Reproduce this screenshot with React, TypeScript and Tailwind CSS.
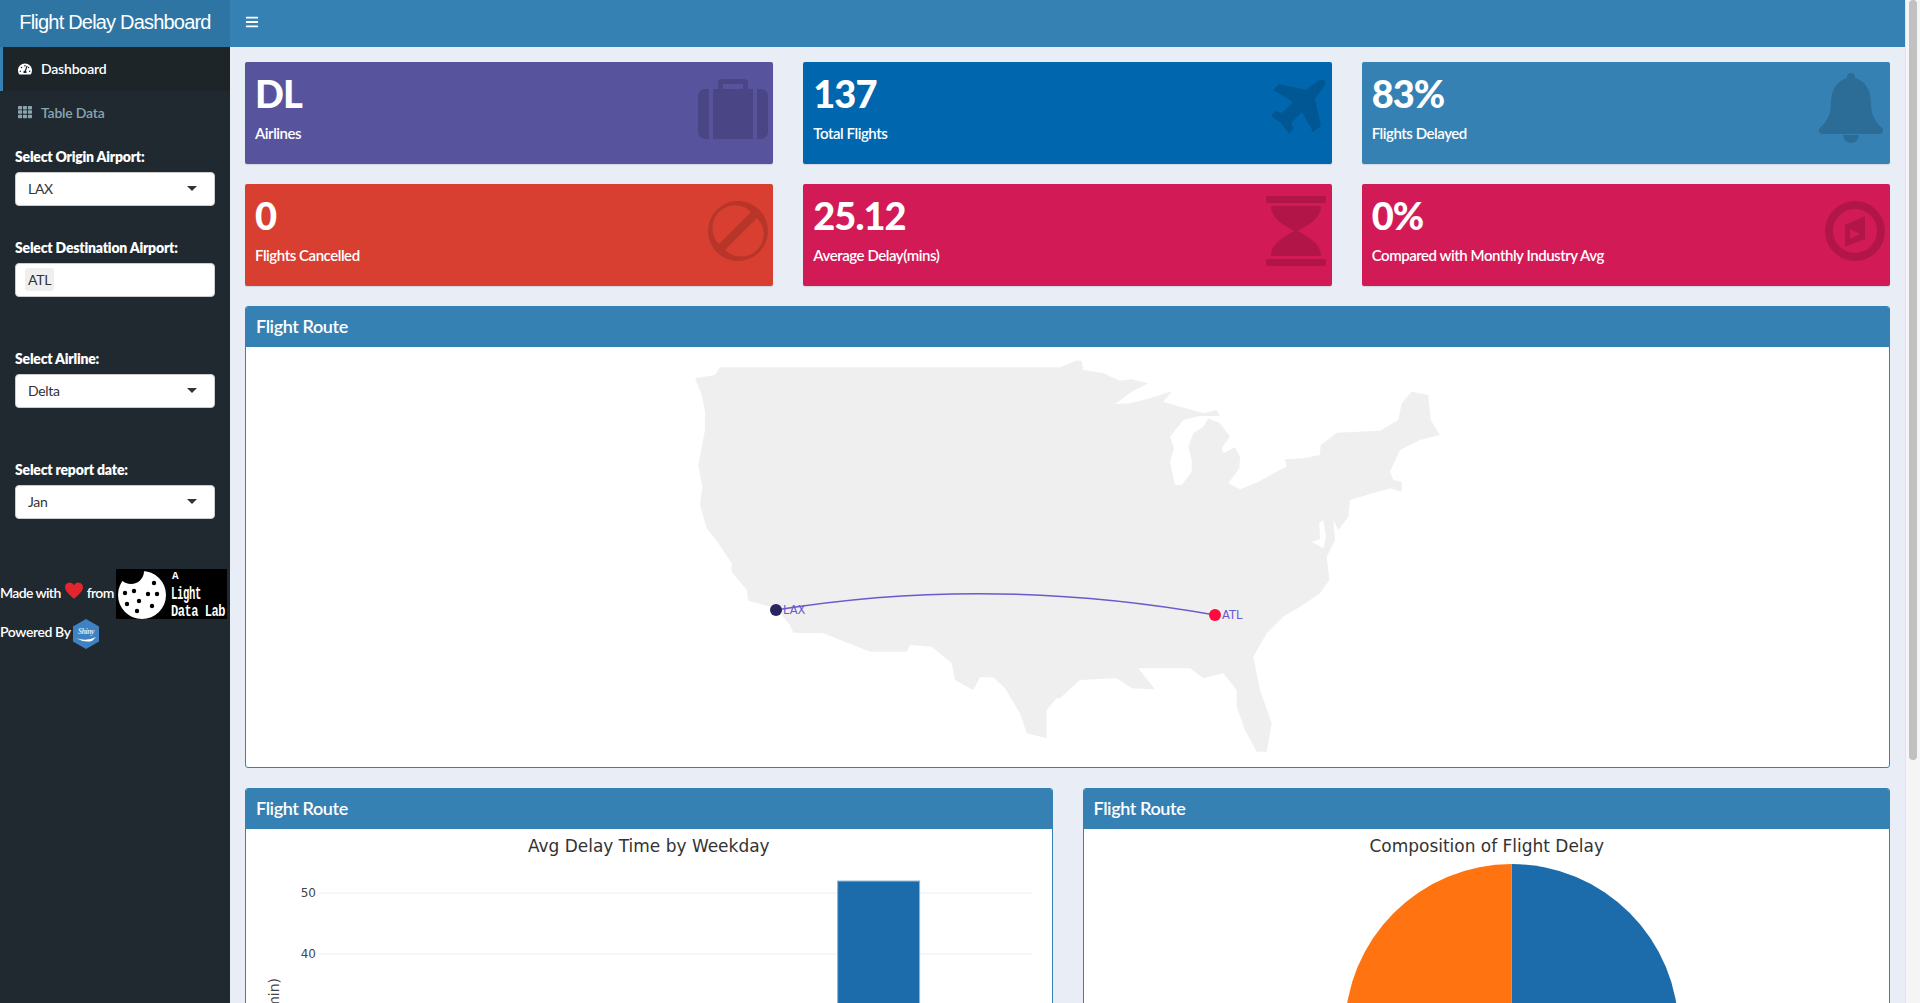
import { FaBars, FaTachometerAlt, FaTh } from 'react-icons/fa';

// map outline, traced in page pixels from the two halves of the map
const toPage = (ox: number, pts: number[][]) => pts.map(([x, y]) => `${(ox + x / 3).toFixed(1)},${(340 + y / 3).toFixed(1)}`);

const eastCoast = toPage(1060, [
  [0, 82], [48, 62], [65, 62], [70, 90], [130, 100], [180, 122], [215, 118], [265, 130], [215, 155], [165, 192],
  [210, 190], [270, 175], [315, 160], [335, 155], [310, 185], [360, 200], [430, 220], [470, 210], [480, 228], [420, 228],
  [370, 240], [330, 290], [342, 325], [330, 365], [345, 435], [365, 435], [395, 395], [395, 360], [385, 320], [400, 280],
  [430, 260], [445, 235], [480, 250], [510, 290], [485, 325], [490, 340], [525, 322], [540, 350], [538, 385], [505, 430],
  [540, 448], [590, 428], [650, 395], [680, 380], [675, 358], [730, 355], [780, 345], [782, 315], [830, 278], [960, 272],
  [1015, 240], [1025, 190], [1055, 155], [1105, 165], [1112, 240], [1140, 285], [1080, 300], [1020, 330], [990, 395], [1000, 420],
  [1025, 425], [1025, 455], [990, 445], [920, 465], [870, 480], [865, 530], [835, 570], [820, 540], [825, 600], [800, 650],
  [808, 720], [780, 760], [720, 800], [670, 830], [620, 880], [580, 950], [600, 1050], [635, 1150], [620, 1235], [590, 1235],
  [555, 1170], [530, 1100], [530, 1050], [490, 1000], [430, 1015], [390, 985], [330, 985], [235, 985], [285, 1048], [215, 1045],
  [170, 1015], [60, 1020], [0, 1075],
]);

const westCoast = toPage(670, [
  [1160, 1075], [1130, 1110], [1130, 1195], [1070, 1180], [1050, 1120], [1005, 1045], [970, 1012], [930, 1012], [910, 1050], [855, 1020],
  [845, 970], [785, 920], [720, 915], [710, 935], [600, 935], [460, 880], [370, 878], [360, 855], [330, 820], [300, 800],
  [235, 782], [230, 750], [185, 695], [185, 670], [145, 610], [110, 565], [90, 495], [97, 440], [85, 375], [105, 270],
  [105, 215], [95, 165], [75, 115], [135, 105], [150, 82],
]);

const usOutline = [...eastCoast, ...westCoast].join(' ');
const chesapeake = toPage(1060, [[778, 548], [790, 540], [798, 590], [790, 625], [755, 605], [780, 598]]).join(' ');

function SuitcaseIcon() {
  return (
    <svg viewBox="0 0 70 60" className="h-[60px] w-[70px]" fill="currentColor">
      <path d="M20 10V4a4 4 0 0 1 4-4h22a4 4 0 0 1 4 4v6h-5V5H25v5z" />
      <path d="M15 10h40v50H15z" />
      <path d="M11 10v50H7a7 7 0 0 1-7-7V17a7 7 0 0 1 7-7zM59 10h4a7 7 0 0 1 7 7v36a7 7 0 0 1-7 7h-4z" />
    </svg>
  );
}

function PlaneIcon() {
  return (
    <svg viewBox="0 0 56 55" className="h-[55px] w-[56px]" fill="currentColor">
      <path d="M55 1 Q56 5 53 9 L45 20 L51 47 L43 53 L32 33 L21 44 L24 49 L19 55 L11 44 L1 37 L5 32 L12 34 L23 23 L3 11 L9 5 L36 11 L46 3 Q51 0 55 1Z" />
    </svg>
  );
}

function BellIcon() {
  return (
    <svg viewBox="0 0 64 71" className="h-[71px] w-[64px]" fill="currentColor">
      <path d="M32 0a4 4 0 0 1 4 5C47 8 52 18 52 30c0 14 6 20 12 26q1 4-3 5H3q-4-1-3-5c6-6 12-12 12-26C12 18 17 8 28 5a4 4 0 0 1 4-5z" />
      <path d="M24 62a8 8 0 0 0 16 0z" />
    </svg>
  );
}

function BanIcon() {
  return (
    <svg viewBox="0 0 60 60" className="h-[60px] w-[60px]" fill="currentColor">
      <path
        fillRule="evenodd"
        d="M30 0a30 30 0 1 1 0 60a30 30 0 0 1 0-60zM43 11A22 22 0 0 0 11 43zM17 49A22 22 0 0 0 49 17z"
      />
    </svg>
  );
}

function HourglassIcon() {
  return (
    <svg viewBox="0 0 60 70" className="h-[70px] w-[60px]" fill="currentColor">
      <rect width="60" height="7" rx="1" />
      <rect y="63" width="60" height="7" rx="1" />
      <path d="M5 10H55C55 24 40 30 32 35C40 40 55 46 55 60H5C5 46 20 40 28 35C20 30 5 24 5 10Z" />
    </svg>
  );
}

function CompassIcon() {
  return (
    <svg viewBox="0 0 60 60" className="h-[60px] w-[60px]" fill="currentColor">
      <path
        fillRule="evenodd"
        d="M30 0a30 30 0 1 1 0 60a30 30 0 0 1 0-60zM30 8a22 22 0 1 0 0 44a22 22 0 0 0 0-44zM40 15V38L20 46V24zM25 28V38L35 33z"
      />
    </svg>
  );
}

const stats = [
  { value: 'DL', label: 'Airlines', color: 'bg-[#58539d]', icon: <SuitcaseIcon />, place: 'right-[5px] top-[17px]' },
  { value: '137', label: 'Total Flights', color: 'bg-[#0067ae]', icon: <PlaneIcon />, place: 'right-[6px] top-[17px]' },
  { value: '83%', label: 'Flights Delayed', color: 'bg-[#3581b4]', icon: <BellIcon />, place: 'right-[7px] top-[11px]' },
  { value: '0', label: 'Flights Cancelled', color: 'bg-[#d83f31]', icon: <BanIcon />, place: 'right-[5px] top-[17px]' },
  { value: '25.12', label: 'Average Delay(mins)', color: 'bg-[#d21b56]', icon: <HourglassIcon />, place: 'right-[6px] top-[12px]' },
  { value: '0%', label: 'Compared with Monthly Industry Avg', color: 'bg-[#d21b56]', icon: <CompassIcon />, place: 'right-[5px] top-[17px]' },
];

function FakeSelect({ value }: { value: string }) {
  return (
    <div className="flex h-[34px] items-center justify-between rounded-[4px] border border-[#ccc] bg-white pb-px pl-[12px] pr-[17px] text-[14px] tracking-[-0.3px] text-[#333]">
      {value}
      <span className="h-0 w-0 border-x-[5px] border-t-[5px] border-x-transparent border-t-[#333]" />
    </div>
  );
}

function SideLabel({ children }: { children: string }) {
  return <div className="mb-[5px] h-[20px] text-[14px] font-extrabold leading-[20px] tracking-[-0.2px] text-white">{children}</div>;
}

function LightDataLogo() {
  return (
    <svg viewBox="0 0 111 50" className="h-[50px] w-[111px] shrink-0 bg-black">
      <circle cx="26" cy="26" r="24" fill="#fff" />
      <circle cx="15" cy="2" r="13" fill="#000" />
      {[[9, 24], [18, 22], [32, 25], [41, 25], [38, 14], [23, 32], [11, 35], [21, 42], [36, 37]].map(([cx, cy]) => (
        <circle key={`${cx}-${cy}`} cx={cx} cy={cy} r="2.200" fill="#000" />
      ))}
      <g fill="#fff" fontFamily="'Liberation Mono', monospace" fontWeight="700">
        <text x="56" y="10" fontSize="11">A</text>
        <text x="55" y="30" fontSize="18" textLength="30" lengthAdjust="spacingAndGlyphs">Light</text>
        <text x="55" y="47" fontSize="16" textLength="54" lengthAdjust="spacingAndGlyphs">Data Lab</text>
      </g>
    </svg>
  );
}

function ShinyHex() {
  return (
    <svg viewBox="0 0 26 30" className="h-[30px] w-[26px]">
      <path d="M13 0L26 7.500V22.500L13 30L0 22.500V7.500Z" fill="#3f82c4" />
      <path d="M3 19Q13 23 23 18L19 22Q11 24 3 19Z" fill="#fff" />
      <text x="13" y="15" textAnchor="middle" fontSize="7.500" fontStyle="italic" fill="#dcebf7" fontFamily="'Liberation Serif', serif">Shiny</text>
    </svg>
  );
}

function Sidebar() {
  return (
    <aside className="w-[230px] shrink-0 bg-[#20292f]">
      <div className="flex h-[44px] items-center border-l-[3px] border-[#3581b4] bg-[#1d2528] pb-px pl-[15px] text-[14px] font-semibold tracking-[-0.2px] text-white">
        <FaTachometerAlt className="mr-[9px] h-[14px] w-[14px]" />
        Dashboard
      </div>
      <div className="flex h-[44px] items-center pb-[2px] pl-[18px] text-[14px] font-semibold tracking-[-0.2px] text-[#8aa4af]">
        <FaTh className="mr-[9px] h-[14px] w-[14px]" />
        Table Data
      </div>
      <div className="px-[15px] pt-[12px]">
        <SideLabel>Select Origin Airport:</SideLabel>
        <FakeSelect value="LAX" />
        <div className="mt-[32px]">
          <SideLabel>Select Destination Airport:</SideLabel>
        </div>
        <div className="flex h-[34px] items-center rounded-[4px] border border-[#ccc] bg-white pb-px pl-[9px] text-[14px] tracking-[-0.3px] text-[#333]">
          <span className="rounded-[3px] bg-[#efefef] px-[3px] py-px">ATL</span>
        </div>
        <div className="mt-[52px]">
          <SideLabel>Select Airline:</SideLabel>
        </div>
        <FakeSelect value="Delta" />
        <div className="mt-[52px]">
          <SideLabel>Select report date:</SideLabel>
        </div>
        <FakeSelect value="Jan" />
      </div>
      <div className="mt-[50px] flex h-[50px] items-center whitespace-nowrap text-[14px] font-semibold tracking-[-0.6px] text-white">
        <span className="mb-[3px]">Made with</span>
        <svg viewBox="0 0 24 22" className="mx-[4px] mb-[8px] h-[17px] w-[18px] shrink-0">
          <path d="M12 22C4 15 0 11 0 6.500A6.300 6.300 0 0 1 12 4A6.300 6.300 0 0 1 24 6.500C24 11 20 15 12 22Z" fill="#e3262e" />
        </svg>
        <span className="mb-[3px] mr-[2px]">from</span>
        <LightDataLogo />
      </div>
      <div className="flex h-[30px] items-center gap-[2px] whitespace-nowrap text-[14px] font-semibold tracking-[-0.4px] text-white">
        <span className="mb-[6px]">Powered By</span>
        <ShinyHex />
      </div>
    </aside>
  );
}

function StatBox({ value, label, color, icon, place }: (typeof stats)[number]) {
  return (
    <div className={`relative h-[102px] rounded-[2px] p-[10px] text-white shadow-[0_1px_1px_rgba(0,0,0,0.1)] ${color}`}>
      <div className="text-[38px] font-black leading-[42px] tracking-[-1px]">{value}</div>
      <div className="mt-[9px] text-[15px] font-semibold leading-[20px] tracking-[-0.45px]">{label}</div>
      <div className={`absolute text-black opacity-15 ${place}`}>{icon}</div>
    </div>
  );
}

function Panel({ children }: { children: React.ReactNode }) {
  return (
    <section className="overflow-hidden rounded-[3px] border border-[#3581b4] bg-white">
      <h3 className="flex h-[40px] items-center bg-[#3581b4] px-[10px] pb-[2px] text-[18px] font-semibold tracking-[-0.4px] text-white">Flight Route</h3>
      {children}
    </section>
  );
}

function RouteMap() {
  return (
    <svg viewBox="246 347 1643 420" className="block h-[420px] w-full">
      <polygon points={usOutline} fill="#efefef" />
      <polygon points={chesapeake} fill="#fff" />
      <path d="M776 610Q990 575 1215 615" fill="none" stroke="#6a5acd" strokeWidth="1.500" />
      <circle cx="776" cy="610" r="6" fill="#2a2560" />
      <circle cx="1215" cy="615" r="6" fill="#ff0a3c" />
      <g fill="#6a5acd" fontFamily="'DejaVu Sans', sans-serif" fontSize="11.500">
        <text x="783" y="614">LAX</text>
        <text x="1222" y="619">ATL</text>
      </g>
    </svg>
  );
}

function WeekdayChart() {
  return (
    <svg viewBox="245 828 806 200" className="block h-[200px] w-full">
      <text x="648" y="851" textAnchor="middle" fontSize="17" fill="#333" fontFamily="'DejaVu Sans', sans-serif">Avg Delay Time by Weekday</text>
      <g stroke="#eee">
        <line x1="318" y1="892" x2="1032" y2="892" />
        <line x1="318" y1="953" x2="1032" y2="953" />
        <line x1="318" y1="1014" x2="1032" y2="1014" />
      </g>
      <g fontSize="12" fill="#444" textAnchor="end" fontFamily="'DejaVu Sans', sans-serif">
        <text x="315" y="896">50</text>
        <text x="315" y="957">40</text>
      </g>
      <rect x="837" y="880" width="82" height="150" fill="#1c6bab" stroke="#8fb5d5" />
      <text transform="translate(278 977) rotate(-90)" textAnchor="end" fontSize="14" fill="#444" fontFamily="'DejaVu Sans', sans-serif">Avg Delay (min)</text>
    </svg>
  );
}

function DelayPie() {
  return (
    <svg viewBox="1083 828 806 200" className="block h-[200px] w-full">
      <text x="1486" y="851" textAnchor="middle" fontSize="17" fill="#333" fontFamily="'DejaVu Sans', sans-serif">Composition of Flight Delay</text>
      <path d="M1511 1030V863A167 167 0 0 1 1678 1030Z" fill="#1c6bab" />
      <path d="M1511 1030V863A167 167 0 0 0 1344 1030Z" fill="#ff7410" />
    </svg>
  );
}

export default function App() {
  return (
    <div className="flex h-screen overflow-hidden bg-[#e9edf5] font-['Lato','Noto_Sans',sans-serif]">
      <div className="flex min-w-0 flex-1 flex-col">
        <header className="flex h-[47px] shrink-0 bg-[#3581b4] text-white">
          <div className="flex w-[230px] items-center justify-center bg-[#2f75a4] pb-[4px] font-['Liberation_Sans',sans-serif] text-[20px] tracking-[-0.8px]">
            Flight Delay Dashboard
          </div>
          <div className="flex items-center pb-[4px] pl-[15px]">
            <FaBars className="h-[14px] w-[14px]" />
          </div>
        </header>
        <div className="flex min-h-0 flex-1">
          <Sidebar />
          <main className="min-w-0 flex-1 overflow-hidden px-[15px] pt-[15px]">
            <div className="grid grid-cols-3 gap-x-[30px] gap-y-[20px]">
              {stats.map((s) => (
                <StatBox key={s.label} {...s} />
              ))}
            </div>
            <div className="mt-[20px]">
              <Panel>
                <RouteMap />
              </Panel>
            </div>
            <div className="mt-[20px] grid grid-cols-2 gap-x-[30px]">
              <Panel>
                <WeekdayChart />
              </Panel>
              <Panel>
                <DelayPie />
              </Panel>
            </div>
          </main>
        </div>
      </div>
      <div className="w-[15px] shrink-0 border-l border-[#e4e4e4] bg-[#f5f5f5] pl-[3px]">
        <div className="h-[760px] w-[8px] rounded-b-[4px] rounded-t-[4px] bg-[#c1c1c1]" />
      </div>
    </div>
  );
}
